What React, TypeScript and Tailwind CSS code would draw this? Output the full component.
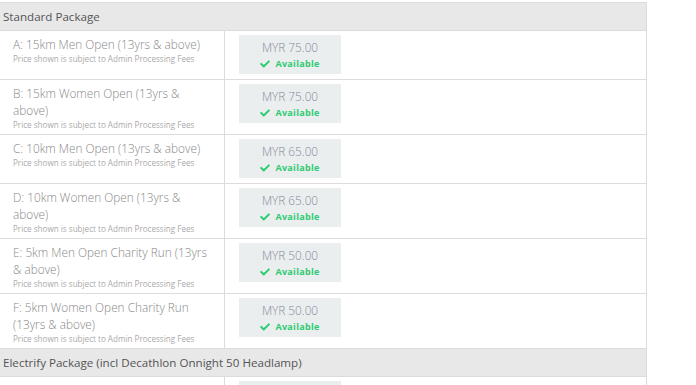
import React from 'react';

interface Ticket {
  name: string;
  price: string;
}

const standard: Ticket[] = [
  { name: 'A: 15km Men Open (13yrs & above)', price: 'MYR 75.00' },
  { name: 'B: 15km Women Open (13yrs & above)', price: 'MYR 75.00' },
  { name: 'C: 10km Men Open (13yrs & above)', price: 'MYR 65.00' },
  { name: 'D: 10km Women Open (13yrs & above)', price: 'MYR 65.00' },
  { name: 'E: 5km Men Open Charity Run (13yrs & above)', price: 'MYR 50.00' },
  { name: 'F: 5km Women Open Charity Run (13yrs & above)', price: 'MYR 50.00' },
];

function Check() {
  return (
    <svg viewBox="0 0 512 512" className="w-[10px] h-[10px] mr-[5px]" fill="#2ecc71">
      <path d="M173.9 439.4l-166.4-166.4c-10-10-10-26.2 0-36.2l36.2-36.2c10-10 26.2-10 36.2 0L192 312.7 432.1 72.6c10-10 26.2-10 36.2 0l36.2 36.2c10 10 10 26.2 0 36.2l-294.4 294.4c-10 10-26.2 10-36.2 0z" />
    </svg>
  );
}

function HeaderRow({ title }: { title: string }) {
  return (
    <div className="h-[28px] bg-[#e8e8e8] border-b border-[#dcdcdc] flex items-center pl-[3px] text-[11.6px] text-[#555]">
      {title}
    </div>
  );
}

function TicketRow({ ticket }: { ticket: Ticket }) {
  return (
    <div className="grid grid-cols-[225px_1fr] border-b border-[#dcdcdc]">
      <div className="border-r border-[#dcdcdc] pl-[13px] pr-[10px] pt-[5px] pb-[4px]">
        <div className="text-[11.8px] leading-[17px] font-light text-[#888]">{ticket.name}</div>
        <div className="text-[8.1px] leading-[11px] text-[#aaa]">Price shown is subject to Admin Processing Fees</div>
      </div>
      <div className="pl-[14px] pt-[4px] pb-[5px]">
        <div className="w-[102px] h-[39px] bg-[#ebeeef] flex flex-col items-center pt-[4px]">
          <div className="text-[11.8px] leading-[17px] font-light text-[#7f8c99]">{ticket.price}</div>
          <div className="flex items-center mt-[1px] text-[9px] leading-[13px] font-bold text-[#2ecc71] tracking-[0.3px]">
            <Check />
            Available
          </div>
        </div>
      </div>
    </div>
  );
}

export default function App() {
  return (
    <div className="w-[696px] h-[385px] overflow-hidden bg-white pt-[2px]" style={{ fontFamily: '"Open Sans", sans-serif' }}>
      <div className="w-[647px] border-t border-r border-[#dcdcdc]">
        <HeaderRow title="Standard Package" />
        {standard.map((t) => (
          <TicketRow key={t.name} ticket={t} />
        ))}
        <HeaderRow title="Electrify Package (incl Decathlon Onnight 50 Headlamp)" />
        <TicketRow ticket={{ name: 'A: 15km Men Open (13yrs & above)', price: 'MYR 95.00' }} />
      </div>
    </div>
  );
}
